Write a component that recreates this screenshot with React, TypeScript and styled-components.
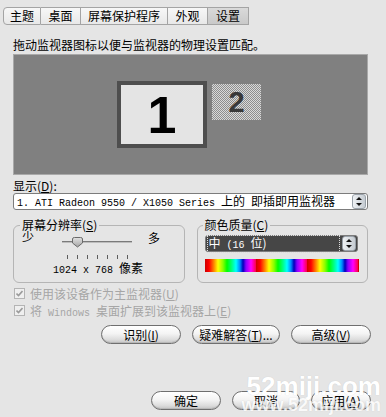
import styled, { createGlobalStyle } from 'styled-components';

const GlobalStyle = createGlobalStyle`
  html, body { margin: 0; padding: 0; }
  body {
    background: #e5e5e5;
    font-family: "Noto Sans CJK SC", "Noto Sans", sans-serif;
    font-size: 12px;
    color: #000;
  }
`;

const Dialog = styled.div`
  position: relative;
  width: 386px;
  height: 417px;
  overflow: hidden;
  background: #e5e5e5;
`;

const TabBar = styled.div`
  display: flex;
  margin: 7px 0 0 3px;
  height: 18px;
`;

const Tab = styled.div<{ $w: number; $active?: boolean }>`
  width: ${p => p.$w}px;
  height: 18px;
  box-sizing: border-box;
  display: flex;
  align-items: center;
  justify-content: center;
  border: 1px solid #a4a4a4;
  border-left: none;
  background: ${p => (p.$active ? 'linear-gradient(#dadada, #c9c9c9)' : 'linear-gradient(#f7f7f7, #e8e8e8)')};
  line-height: 16px;
  &:first-child {
    border-left: 1px solid #a4a4a4;
    border-radius: 4px 0 0 4px;
  }
`;

const Body = styled.div`
  display: flex;
  flex-direction: column;
  padding: 0 18px 0 13px;
`;

const Line = styled.div`
  line-height: 14px;
  white-space: nowrap;
`;

const Hint = styled(Line)`
  margin-top: 13px;
`;

const Canvas = styled.div`
  position: relative;
  margin-top: 2px;
  height: 121px;
  box-sizing: border-box;
  background: #808080;
  border: 1px solid #a9a9a9;
`;

const Monitor = styled.div<{ $x: number; $y: number; $w: number; $h: number; $primary?: boolean }>`
  position: absolute;
  left: ${p => p.$x}px;
  top: ${p => p.$y}px;
  width: ${p => p.$w}px;
  height: ${p => p.$h}px;
  box-sizing: border-box;
  display: flex;
  align-items: center;
  justify-content: center;
  font-family: "Liberation Sans", Arial, sans-serif;
  font-weight: bold;
  line-height: 1;
  ${p =>
    p.$primary
      ? `border: 4px solid #4e4e4e; background: #e4e4e4; font-size: 52px; color: #000;`
      : `background: repeating-conic-gradient(#d9d9d9 0 25%, #8e8e8e 0 50%) 0 0 / 2px 2px; font-size: 29px; color: #383838;`}
`;

const FieldLabel = styled(Line)`
  margin-top: 4px;
`;

const Select = styled.div<{ $dark?: boolean }>`
  display: flex;
  align-items: center;
  height: 17px;
  box-sizing: border-box;
  border: 1px solid #7c7c7c;
  border-radius: 3px;
  padding: 0 1px;
  background: ${p => (p.$dark ? '#464646' : '#fff')};
  color: ${p => (p.$dark ? '#fff' : '#000')};
`;

const SelectText = styled.div<{ $focus?: boolean }>`
  flex: 1;
  min-width: 0;
  line-height: 13px;
  white-space: nowrap;
  box-sizing: border-box;
  padding-left: 1px;
  border: ${p => (p.$focus ? '1px dotted #ddd' : '1px solid transparent')};
`;

const Mono = styled.span`
  font-family: "Liberation Mono", "Courier New", monospace;
  font-size: 10px;
  white-space: pre;
`;

const SpinBox = styled.div`
  width: 12px;
  height: 13px;
  margin-left: 2px;
  border-radius: 3px;
  border: 1px solid #9aa2aa;
  background: linear-gradient(90deg, #eef1f4, #c6ccd2);
  display: flex;
  align-items: center;
  justify-content: center;
`;

const Groups = styled.div`
  display: grid;
  grid-template-columns: 1fr 1fr;
  gap: 12px;
  margin-top: 8px;
`;

const Group = styled.div<{ $pl: number; $pr: number }>`
  margin-top: 7px;
  height: 58px;
  box-sizing: border-box;
  border: 1px solid #b5b5b5;
  border-radius: 6px;
  padding: 0 ${p => p.$pr}px 0 ${p => p.$pl}px;
  display: flex;
  flex-direction: column;
`;

const Legend = styled.div`
  align-self: flex-start;
  margin: -8px 0 0 -2px;
  padding: 0 2px;
  background: #e5e5e5;
  line-height: 14px;
  white-space: nowrap;
`;

const SliderRow = styled.div`
  display: flex;
  align-items: flex-start;
  margin-top: -2px;
  height: 20px;
`;

const SliderEnd = styled.span<{ $ml: number; $mt: number }>`
  margin: ${p => p.$mt}px 0 0 ${p => p.$ml}px;
  line-height: 14px;
`;

const Ticks = styled.div`
  display: flex;
  gap: 9px;
  margin: 5px 0 0 45px;
`;

const Tick = styled.span`
  width: 1px;
  height: 4px;
  background: #5c5c5c;
`;

const Resolution = styled(Line)`
  margin: 2px 0 0 31px;
`;

const ColorSelect = styled(Select)`
  margin-top: 3px;
`;

const Spectrum = styled.div`
  margin: 7px -1px 0 0;
  height: 13px;
  background: repeating-linear-gradient(
    90deg,
    #cc0000 0px,
    #ff0000 4px,
    #ff8800 9px,
    #ffff00 13px,
    #88ff00 18px,
    #00ff00 22px,
    #00ff88 27px,
    #00ffff 31px,
    #0088ff 35px,
    #0000bb 38px,
    #8800ff 41px,
    #ff00ff 46px,
    #ff0044 51px
  );
`;

const CheckRow = styled.div<{ $first?: boolean }>`
  display: flex;
  align-items: center;
  gap: 5px;
  height: 17px;
  margin: ${p => (p.$first ? 2 : 0)}px 0 0 1px;
  color: #a6a6a6;
  white-space: nowrap;
`;

const CheckBox = styled.span`
  width: 11px;
  height: 11px;
  box-sizing: border-box;
  border: 1px solid #b4b4b4;
  background: #efefef;
  display: flex;
  align-items: center;
  justify-content: center;
`;

const ButtonRow = styled.div<{ $mt: number }>`
  display: flex;
  justify-content: flex-end;
  gap: 11px;
  margin: ${p => p.$mt}px -3px 0 0;
`;

const Button = styled.button<{ $w: number }>`
  width: ${p => p.$w}px;
  height: 19px;
  padding: 0;
  box-sizing: border-box;
  border: 1px solid #6f6f6f;
  border-radius: 10px;
  background: linear-gradient(#ffffff 0%, #f4f4f4 45%, #dcdcdc 80%, #c4c4c4 100%);
  box-shadow: inset 0 -1px 0 #b8b8b8;
  font-family: inherit;
  font-size: 12px;
  line-height: 16px;
  color: #000;
  white-space: nowrap;
`;

const Watermark = styled.div`
  position: absolute;
  right: 5px;
  bottom: 4px;
  display: flex;
  flex-direction: column;
  align-items: flex-end;
  font-family: "Liberation Sans", Arial, sans-serif;
  font-weight: bold;
  color: #fff;
  text-shadow: 0 0 1px rgba(0, 0, 0, 0.15);
  pointer-events: none;
`;

const MarkBig = styled.span`
  font-size: 26px;
  line-height: 21px;
`;

const MarkSmall = styled.span`
  font-size: 18px;
  line-height: 16px;
  opacity: 0.8;
`;

const Spin = () => (
  <SpinBox>
    <svg width="6" height="9" viewBox="0 0 6 9">
      <path d="M3 0 L6 3 H0 Z" fill="#111" />
      <path d="M3 9 L6 6 H0 Z" fill="#111" />
    </svg>
  </SpinBox>
);

const Check = () => (
  <CheckBox>
    <svg width="7" height="7" viewBox="0 0 7 7">
      <path d="M0.5 3.5 L2.5 5.5 L6.5 1" stroke="#9a9a9a" strokeWidth="1.6" fill="none" />
    </svg>
  </CheckBox>
);

const Slider = () => (
  <svg width="74" height="20" viewBox="0 0 74 20" style={{ marginLeft: 26 }}>
    <defs>
      <linearGradient id="thumb" x1="0" y1="0" x2="0" y2="1">
        <stop offset="0" stopColor="#e2e2e2" />
        <stop offset="1" stopColor="#a4a4a4" />
      </linearGradient>
    </defs>
    <rect x="2" y="11" width="70" height="1" fill="#7a7a7a" />
    <rect x="2" y="12" width="70" height="1" fill="#bdbdbd" />
    <path
      d="M12.5 9 Q12.5 7.5 14.5 7.5 H20.5 Q22.5 7.5 22.5 9 V13 L17.5 17 L12.5 13 Z"
      fill="url(#thumb)"
      stroke="#6a6a6a"
    />
  </svg>
);

const tabs = [
  { label: '主题', w: 38 },
  { label: '桌面', w: 40 },
  { label: '屏幕保护程序', w: 87 },
  { label: '外观', w: 40 },
  { label: '设置', w: 41, active: true },
];

export default function App() {
  return (
    <Dialog>
      <GlobalStyle />
      <TabBar>
        {tabs.map(t => (
          <Tab key={t.label} $w={t.w} $active={t.active}>
            {t.label}
          </Tab>
        ))}
      </TabBar>
      <Body>
        <Hint>拖动监视器图标以便与监视器的物理设置匹配。</Hint>
        <Canvas>
          <Monitor $primary $x={103} $y={26} $w={90} $h={67}>1</Monitor>
          <Monitor $x={198} $y={29} $w={49} $h={36}>2</Monitor>
        </Canvas>
        <FieldLabel>
          显示(<u>D</u>):
        </FieldLabel>
        <Select>
          <SelectText>
            <Mono>1. ATI Radeon 9550 / X1050 Series </Mono>上的<Mono> </Mono>即插即用监视器
          </SelectText>
          <Spin />
        </Select>
        <Groups>
          <Group $pl={8} $pr={8}>
            <Legend>
              屏幕分辨率(<u>S</u>)
            </Legend>
            <SliderRow>
              <SliderEnd $ml={0} $mt={0}>少</SliderEnd>
              <Slider />
              <SliderEnd $ml={14} $mt={1}>多</SliderEnd>
            </SliderRow>
            <Ticks>
              {Array.from({ length: 7 }).map((_, i) => (
                <Tick key={i} />
              ))}
            </Ticks>
            <Resolution>
              <Mono>1024 x 768 </Mono>像素
            </Resolution>
          </Group>
          <Group $pl={7} $pr={9}>
            <Legend>
              颜色质量(<u>C</u>)
            </Legend>
            <ColorSelect $dark>
              <SelectText $focus>
                中<Mono> (16 </Mono>位)
              </SelectText>
              <Spin />
            </ColorSelect>
            <Spectrum />
          </Group>
        </Groups>
        <CheckRow $first>
          <Check />
          <span>
            使用该设备作为主监视器(<u>U</u>)
          </span>
        </CheckRow>
        <CheckRow>
          <Check />
          <span>
            将<Mono> Windows </Mono>桌面扩展到该监视器上(<u>E</u>)
          </span>
        </CheckRow>
        <ButtonRow $mt={6}>
          <Button $w={80}>
            识别(<u>I</u>)
          </Button>
          <Button $w={88}>
            疑难解答(<u>T</u>)...
          </Button>
          <Button $w={80}>
            高级(<u>V</u>)
          </Button>
        </ButtonRow>
        <ButtonRow $mt={47}>
          <Button $w={70}>确定</Button>
          <Button $w={68}>取消</Button>
          <Button $w={60}>
            应用(<u>A</u>)
          </Button>
        </ButtonRow>
      </Body>
      <Watermark>
        <MarkBig>52miji.com</MarkBig>
        <MarkSmall>www.52miji.com</MarkSmall>
      </Watermark>
    </Dialog>
  );
}
